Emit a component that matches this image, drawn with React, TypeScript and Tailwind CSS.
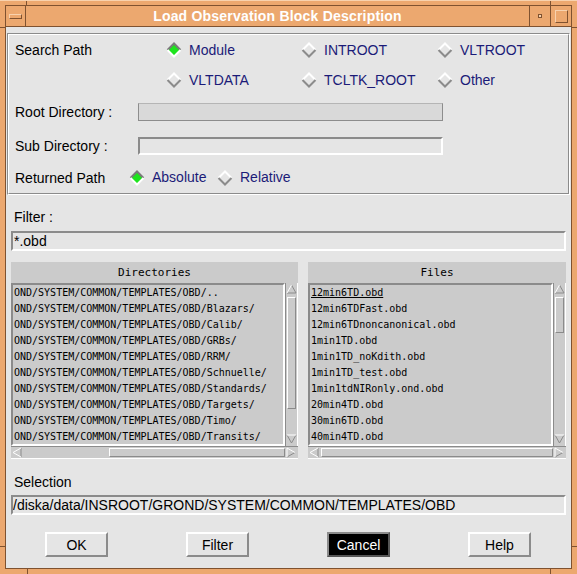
import React from "react";

const dark = "#8b8b8b";

const dirs = [
  "OND/SYSTEM/COMMON/TEMPLATES/OBD/..",
  "OND/SYSTEM/COMMON/TEMPLATES/OBD/Blazars/",
  "OND/SYSTEM/COMMON/TEMPLATES/OBD/Calib/",
  "OND/SYSTEM/COMMON/TEMPLATES/OBD/GRBs/",
  "OND/SYSTEM/COMMON/TEMPLATES/OBD/RRM/",
  "OND/SYSTEM/COMMON/TEMPLATES/OBD/Schnuelle/",
  "OND/SYSTEM/COMMON/TEMPLATES/OBD/Standards/",
  "OND/SYSTEM/COMMON/TEMPLATES/OBD/Targets/",
  "OND/SYSTEM/COMMON/TEMPLATES/OBD/Timo/",
  "OND/SYSTEM/COMMON/TEMPLATES/OBD/Transits/",
];

const files = [
  "12min6TD.obd",
  "12min6TDFast.obd",
  "12min6TDnoncanonical.obd",
  "1min1TD.obd",
  "1min1TD_noKdith.obd",
  "1min1TD_test.obd",
  "1min1tdNIRonly.ond.obd",
  "20min4TD.obd",
  "30min6TD.obd",
  "40min4TD.obd",
];

function Diamond({ on }: { on?: boolean }) {
  return (
    <svg width="16" height="16" viewBox="0 0 16 16" className="shrink-0">
      <polygon points="8,1.5 14.5,8 8,14.5 1.5,8" fill={on ? "#1ee41e" : "#e5e5e5"} />
      <polyline points="1.5,8 8,1.5 14.5,8" fill="none" stroke={on ? "#7a7a7a" : "#ffffff"} strokeWidth="2" />
      <polyline points="1.5,8 8,14.5 14.5,8" fill="none" stroke={on ? "#ffffff" : dark} strokeWidth="2" />
    </svg>
  );
}

function Radio({ label, on, className }: { label: string; on?: boolean; className?: string }) {
  return (
    <div className={`flex items-center gap-[7px] ${className ?? ""}`}>
      <Diamond on={on} />
      <span className="text-[14px] text-[#1b1b78]">{label}</span>
    </div>
  );
}

function Arrow({ dir }: { dir: "up" | "down" | "left" | "right" }) {
  const pts = {
    up: { a: "1,9 5.5,1", b: "5.5,1 10,9 1,9" },
    down: { a: "1,1 10,1", b: "10,1 5.5,9 1,1" },
    left: { a: "9,1 1,5.5 9,10", b: "9,1 9,10" },
    right: { a: "1,10 1,1 9,5.5", b: "9,5.5 1,10" },
  }[dir];
  return (
    <svg width="11" height="11" viewBox="0 0 11 11" className="shrink-0">
      <polyline points={pts.b} fill="none" stroke={dark} strokeWidth="1" />
      <polyline points={pts.a} fill="none" stroke="#ffffff" strokeWidth="1" />
    </svg>
  );
}

function VScroll({ offset, size }: { offset: string; size: string }) {
  return (
    <div className="w-[13px] flex flex-col items-center border-l border-[#8b8b8b] border-r border-r-white bg-[#cbcbcb] py-[1px]">
      <Arrow dir="up" />
      <div className={`flex-1 w-full flex flex-col items-center ${offset}`}>
        <div className={`w-[9px] ${size} border border-t-white border-l-white border-b-[#8b8b8b] border-r-[#8b8b8b] bg-[#cbcbcb]`} />
      </div>
      <Arrow dir="down" />
    </div>
  );
}

function HScroll({ offset, size }: { offset: string; size: string }) {
  return (
    <div className="h-[13px] flex items-center border-t border-[#8b8b8b] border-b border-b-white bg-[#cbcbcb] px-[1px]">
      <Arrow dir="left" />
      <div className={`flex-1 h-full flex items-center ${offset}`}>
        <div className={`h-[9px] ${size} border border-t-white border-l-white border-b-[#8b8b8b] border-r-[#8b8b8b] bg-[#cbcbcb]`} />
      </div>
      <Arrow dir="right" />
    </div>
  );
}

function ListPanel({
  title,
  rows,
  vOffset,
  vSize,
  hOffset,
  hSize,
  className,
}: {
  title: string;
  rows: string[];
  vOffset: string;
  vSize: string;
  hOffset: string;
  hSize: string;
  className?: string;
}) {
  return (
    <div className={`flex flex-col ${className ?? ""}`}>
      <div className="h-[21px] bg-[#cbcbcb] flex items-center justify-center font-['DejaVu_Sans_Mono',monospace] text-[11px] text-black pt-px">
        {title}
      </div>
      <div className="h-[163px] flex">
        <div className="flex-1 overflow-hidden border-2 border-t-[#8b8b8b] border-l-[#8b8b8b] border-b-white border-r-white bg-[#cbcbcb] font-['DejaVu_Sans_Mono',monospace] text-[10px] text-black">
          {rows.map((r, i) => (
            <div key={r} className={`h-[16px] leading-[16px] pl-[1px] whitespace-nowrap ${i === 0 && title === "Files" ? "underline" : ""}`}>
              {r}
            </div>
          ))}
        </div>
        <VScroll offset={vOffset} size={vSize} />
      </div>
      <HScroll offset={hOffset} size={hSize} />
    </div>
  );
}

function Btn({ label, active }: { label: string; active?: boolean }) {
  return (
    <div
      className={`w-[63px] h-[25px] flex items-center justify-center text-[14px] pt-px border-2 ${
        active
          ? "bg-black text-white border-t-[#8b8b8b] border-l-[#8b8b8b] border-b-[#555] border-r-[#555]"
          : "bg-[#e5e5e5] text-black border-t-white border-l-white border-b-[#8b8b8b] border-r-[#8b8b8b]"
      }`}
    >
      {label}
    </div>
  );
}

export default function App() {
  return (
    <div className="w-[577px] h-[574px] bg-[#eca86f] border-t border-[#f8d2ae] pt-[4px] px-[5px] pb-[5px] relative font-['Liberation_Sans',Arial,sans-serif]">
      {/* frame corner ticks */}
      <div className="absolute left-[26px] top-0 w-px h-[5px] bg-[#7f5230]" />
      <div className="absolute left-0 top-[26px] w-[5px] h-px bg-[#7f5230]" />
      <div className="absolute left-[550px] top-0 w-px h-[5px] bg-[#7f5230]" />
      <div className="absolute right-0 top-[26px] w-[5px] h-px bg-[#7f5230]" />
      <div className="absolute left-0 top-[545px] w-[5px] h-px bg-[#7f5230]" />
      <div className="absolute right-0 top-[545px] w-[5px] h-px bg-[#7f5230]" />
      <div className="absolute left-[27px] bottom-0 w-px h-[5px] bg-[#7f5230]" />
      <div className="absolute left-[550px] bottom-0 w-px h-[5px] bg-[#7f5230]" />

      <div className="h-full flex flex-col border border-[#7f5230]">
        <div className="h-[21px] flex border-b border-[#7f5230]">
          <div className="w-[20px] border-r border-[#7f5230] flex items-center justify-center">
            <div className="w-[13px] h-[5px] border border-[#7f5230] border-t-[#f8d2ae] border-l-[#f8d2ae]" />
          </div>
          <div className="flex-1 flex items-center justify-center text-white font-bold text-[14px] tracking-[0.2px]">
            Load Observation Block Description
          </div>
          <div className="w-[21px] border-l border-[#7f5230] flex items-center justify-center">
            <div className="w-[4px] h-[4px] border border-[#7f5230] bg-[#f8d2ae]" />
          </div>
          <div className="w-[21px] border-l border-[#7f5230] flex items-center justify-center">
            <div className="w-[13px] h-[13px] border border-[#7f5230] border-t-[#f8d2ae] border-l-[#f8d2ae]" />
          </div>
        </div>

        <div className="flex-1 bg-[#e5e5e5] flex flex-col text-black">
          {/* search path group */}
          <div className="mt-[6px] mx-[1px] border border-t-[#8b8b8b] border-l-[#8b8b8b] border-b-white border-r-white">
            <div className="border border-t-white border-l-white border-b-[#8b8b8b] border-r-[#8b8b8b] pl-[6px] text-[14px]">
              <div className="h-[30px] flex items-center">
                <div className="w-[151px] pt-px">Search Path</div>
                <Radio label="Module" on className="w-[135px]" />
                <Radio label="INTROOT" className="w-[136px]" />
                <Radio label="VLTROOT" />
              </div>
              <div className="h-[30px] flex items-center">
                <div className="w-[151px]" />
                <Radio label="VLTDATA" className="w-[135px]" />
                <Radio label="TCLTK_ROOT" className="w-[136px]" />
                <Radio label="Other" />
              </div>
              <div className="h-[34px] flex items-center">
                <div className="w-[123px] pt-px">Root Directory :</div>
                <div className="w-[305px] h-[18px] border border-[#8d8d8d] border-t-[#b5b5b5] bg-[#d9d9d9]" />
              </div>
              <div className="h-[33px] flex items-center">
                <div className="w-[123px] pt-px">Sub Directory :</div>
                <div className="w-[305px] h-[18px] border-2 border-t-[#8b8b8b] border-l-[#8b8b8b] border-b-white border-r-white bg-[#e5e5e5]" />
              </div>
              <div className="h-[31px] flex items-center">
                <div className="w-[114px] pt-px">Returned Path</div>
                <Radio label="Absolute" on className="w-[88px]" />
                <Radio label="Relative" />
              </div>
            </div>
          </div>

          <div className="px-[5px] flex flex-col text-[14px]">
            <div className="mt-[12px] h-[20px] flex items-center pl-[3px] pt-px">Filter :</div>
            <div className="mt-[4px] h-[20px] flex items-center px-[1px] border-2 border-t-[#8b8b8b] border-l-[#8b8b8b] border-b-white border-r-white">
              *.obd
            </div>

            <div className="mt-[11px] flex gap-[10px]">
              <ListPanel
                title="Directories"
                rows={dirs}
                vOffset="pt-[2px]"
                vSize="h-[112px]"
                hOffset="pl-[86px] pr-[1px]"
                hSize="flex-1"
                className="w-[287px]"
              />
              <ListPanel
                title="Files"
                rows={files}
                vOffset="pt-[2px]"
                vSize="h-[36px]"
                hOffset="px-[1px]"
                hSize="flex-1"
                className="flex-1"
              />
            </div>

            <div className="mt-[13px] h-[20px] flex items-center pl-[3px] pt-px">Selection</div>
            <div className="mt-[3px] h-[20px] flex items-center border-2 border-t-[#8b8b8b] border-l-[#8b8b8b] border-b-white border-r-white whitespace-nowrap overflow-hidden">
              /diska/data/INSROOT/GROND/SYSTEM/COMMON/TEMPLATES/OBD
            </div>

            <div className="mt-[17px] flex gap-[78px] pl-[34px]">
              <Btn label="OK" />
              <Btn label="Filter" />
              <Btn label="Cancel" active />
              <Btn label="Help" />
            </div>
          </div>
        </div>
      </div>
    </div>
  );
}
